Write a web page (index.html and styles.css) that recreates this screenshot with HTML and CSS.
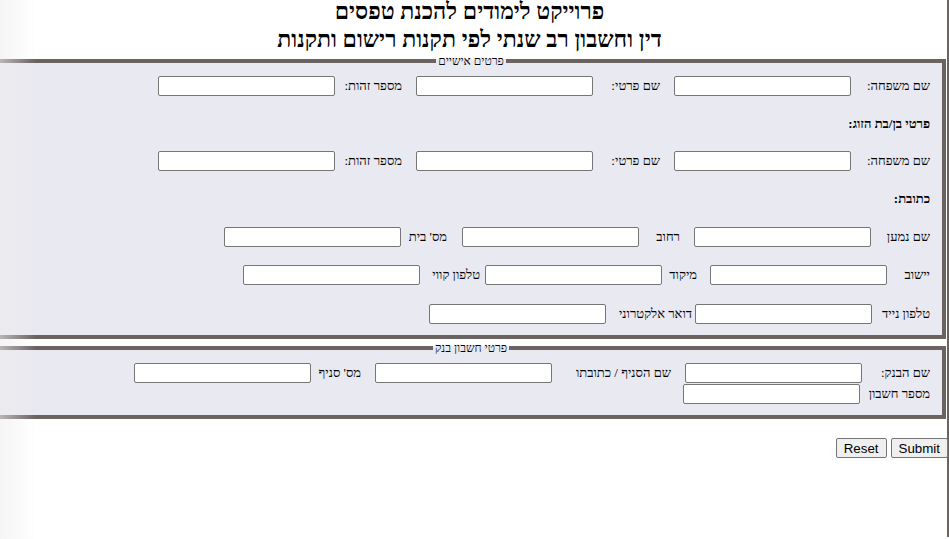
FILE: index.html
```html
<!DOCTYPE html>
<html lang="he" dir="rtl">
<head>
<meta charset="utf-8">
<title>פרוייקט לימודים להכנת טפסים</title>
<link rel="stylesheet" href="styles.css">
</head>
<body>
<div class="page">
  <h2 class="title">פרוייקט לימודים להכנת טפסים<br>דין וחשבון רב שנתי לפי תקנות רישום ותקנות</h2>
  <form class="form">
    <fieldset class="box box-personal">
      <legend class="legend">פרטים אישיים</legend>
      <div class="row r1">
        <span class="lbl w79">שם משפחה:</span><input class="inp" type="text">
        <span class="lbl w81 p14">שם פרטי:</span><input class="inp" type="text">
        <span class="lbl w81 p14">מספר זהות:</span><input class="inp" type="text">
      </div>
      <div class="sub">פרטי בן/בת הזוג:</div>
      <div class="row r2">
        <span class="lbl w79">שם משפחה:</span><input class="inp" type="text">
        <span class="lbl w81 p14">שם פרטי:</span><input class="inp" type="text">
        <span class="lbl w81 p14">מספר זהות:</span><input class="inp" type="text">
      </div>
      <div class="sub">כתובת:</div>
      <div class="row r3">
        <span class="lbl w59">שם נמען</span><input class="inp" type="text">
        <span class="lbl w55 p14">רחוב</span><input class="inp" type="text">
        <span class="lbl w61 p15">מס' בית</span><input class="inp" type="text">
      </div>
      <div class="row r4">
        <span class="lbl w43">יישוב</span><input class="inp" type="text">
        <span class="lbl w48 p13">מיקוד</span><input class="inp" type="text">
        <span class="lbl w65 p5">טלפון קווי</span><input class="inp" type="text">
      </div>
      <div class="row r5">
        <span class="lbl w58">טלפון נייד</span><input class="inp" type="text">
        <span class="lbl w89 p3">דואר אלקטרוני</span><input class="inp" type="text">
      </div>
    </fieldset>
    <fieldset class="box box-bank">
      <legend class="legend">פרטי חשבון בנק</legend>
      <div class="row b1">
        <span class="lbl w68">שם הבנק:</span><input class="inp" type="text">
        <span class="lbl w133 p14">שם הסניף / כתובתו</span><input class="inp" type="text">
        <span class="lbl w64 p14">מס' סניף</span><input class="inp" type="text">
      </div>
      <div class="row b2">
        <span class="lbl w70">מספר חשבון</span><input class="inp" type="text">
      </div>
    </fieldset>
    <div class="actions">
      <input class="btn" type="submit" value="Submit">
      <input class="btn" type="reset" value="Reset">
    </div>
  </form>
</div>
</body>
</html>
```
FILE: styles.css
```css
html, body {
  margin: 0;
  padding: 0;
  background: #ffffff;
}
body {
  font-family: "Liberation Serif", "DejaVu Serif", serif;
  color: #000;
  direction: rtl;
  min-height: 539px;
  overflow: hidden;
}
body::before {
  content: "";
  position: fixed;
  left: 0;
  top: 0;
  width: 36px;
  height: 100%;
  background: linear-gradient(to right, rgba(238,238,238,0.6), rgba(255,255,255,0));
  pointer-events: none;
  z-index: 5;
}
.page {
  width: 947px;
  min-height: 539px;
  border-right: 2px solid #6b6262;
  box-sizing: content-box;
}
.title {
  margin: -2px 0 0;
  padding-right: 8px;
  font-size: 23px;
  line-height: 28px;
  font-weight: bold;
  text-align: center;
}
.form {
  margin: 0;
}
.box {
  margin: 0 1px 0 0;
  padding: 0 12px 11px;
  border: 4px solid #6b6262;
  border-left: 0;
  background: #e9e9f1;
  min-width: 0;
}
.box-bank {
  margin-top: 2px;
}
.legend {
  margin: 0 auto;
  padding: 0 2px;
  font-size: 12px;
  line-height: 14px;
}
.row {
  display: flex;
  align-items: center;
  height: 20px;
}
.r1 { margin-top: 8px; }
.r2 { margin-top: 17px; }
.r3 { margin-top: 18px; }
.r4 { margin-top: 18px; }
.r5 { margin-top: 19px; }
.b1 { margin-top: 8px; }
.b2 { margin-top: 1px; }
.sub {
  margin-top: 18px;
  font-size: 13px;
  line-height: 20px;
  font-weight: bold;
}
.lbl {
  flex: none;
  font-size: 13px;
  white-space: nowrap;
  text-align: right;
  box-sizing: border-box;
}
.inp {
  flex: none;
  width: 177px;
  height: 20px;
  box-sizing: border-box;
  margin: 0;
  padding: 1px 2px;
  border: 1px solid #767676;
  border-radius: 2px;
  background: #fff;
  font: 13px "Liberation Sans", Arial, sans-serif;
}
.w43 { width: 43px; }
.w48 { width: 48px; }
.w55 { width: 55px; }
.w58 { width: 58px; }
.w59 { width: 59px; }
.w61 { width: 61px; }
.w64 { width: 64px; }
.w65 { width: 65px; }
.w68 { width: 68px; }
.w70 { width: 70px; }
.w79 { width: 79px; }
.w81 { width: 81px; }
.w89 { width: 89px; }
.w133 { width: 133px; }
.p3 { padding-right: 3px; }
.p5 { padding-right: 5px; }
.p13 { padding-right: 13px; }
.p14 { padding-right: 14px; }
.p15 { padding-right: 15px; }
.actions {
  display: flex;
  gap: 4px;
  margin-top: 19px;
  margin-right: -1px;
}
.btn {
  height: 20px;
  margin: 0;
  padding: 0 7px;
  border: 1px solid #767676;
  border-radius: 2px;
  background: #efefef;
  color: #000;
  font: 13.33px "Liberation Sans", Arial, sans-serif;
}
```
